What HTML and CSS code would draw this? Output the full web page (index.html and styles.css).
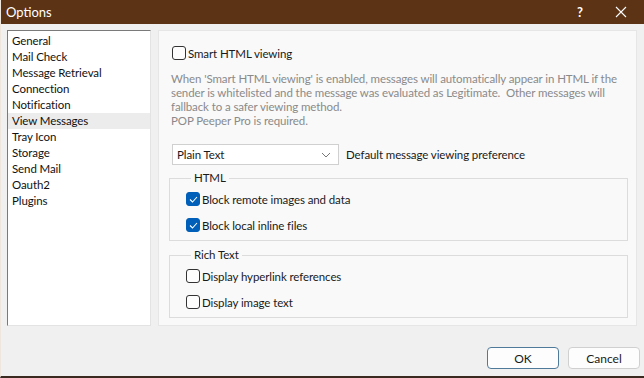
FILE: index.html
```html
<!DOCTYPE html>
<html>

<head>
	<title>Options</title>
	<link rel="stylesheet" href="styles.css">
</head>

<body>
	<div class="window">
		<div class="titlebar">
			<span class="title">Options</span>
			<span class="help">?</span>
			<span class="close">
				<svg width="12" height="12" viewBox="0 0 12 12">
					<path d="M1 1 L11 11 M11 1 L1 11" stroke="#fff" stroke-width="1.1" fill="none" />
				</svg>
			</span>
		</div>

		<div class="main">
			<ul class="nav-list">
				<li>General</li>
				<li>Mail Check</li>
				<li>Message Retrieval</li>
				<li>Connection</li>
				<li>Notification</li>
				<li class="selected">View Messages</li>
				<li>Tray Icon</li>
				<li>Storage</li>
				<li>Send Mail</li>
				<li>Oauth2</li>
				<li>Plugins</li>
			</ul>

			<div class="panel">
				<label class="check smart">
					<span class="box"></span>
					<span>Smart HTML viewing</span>
				</label>

				<p class="description">
					When 'Smart HTML viewing' is enabled, messages will automatically appear in HTML if the<br>
					sender is whitelisted and the message was evaluated as Legitimate.&nbsp; Other messages will<br>
					fallback to a safer viewing method.<br>
					POP Peeper Pro is required.
				</p>

				<div class="view-row">
					<div class="dropdown">
						<span>Plain Text</span>
						<svg width="10" height="6" viewBox="0 0 10 6">
							<path d="M1 1 L5 5 L9 1" stroke="#777" stroke-width="1" fill="none" />
						</svg>
					</div>
					<span class="dropdown-label">Default message viewing preference</span>
				</div>

				<fieldset class="group">
					<legend>HTML</legend>
					<label class="check checked">
						<span class="box">
							<svg width="9" height="7" viewBox="0 0 9 7">
								<path d="M1 3.5 L3.5 6 L8 1" stroke="#fff" stroke-width="1.1" fill="none" />
							</svg>
						</span>
						<span>Block remote images and data</span>
					</label>
					<label class="check checked">
						<span class="box">
							<svg width="9" height="7" viewBox="0 0 9 7">
								<path d="M1 3.5 L3.5 6 L8 1" stroke="#fff" stroke-width="1.1" fill="none" />
							</svg>
						</span>
						<span>Block local inline files</span>
					</label>
				</fieldset>

				<fieldset class="group">
					<legend>Rich Text</legend>
					<label class="check">
						<span class="box"></span>
						<span>Display hyperlink references</span>
					</label>
					<label class="check">
						<span class="box"></span>
						<span>Display image text</span>
					</label>
				</fieldset>
			</div>
		</div>

		<div class="footer">
			<button class="btn btn-default">OK</button>
			<button class="btn">Cancel</button>
		</div>
	</div>
</body>

</html>
```

FILE: styles.css
```css
body {
	margin: 0;
	padding: 0;
	background-color: #f0f0f0;
	font-family: Lato, "Noto Sans", sans-serif;
	font-size: 11.5px;
	letter-spacing: -0.1px;
	color: #1a1a1a;
}

.window {
	width: 644px;
	height: 378px;
	display: flex;
	flex-direction: column;
	box-sizing: border-box;
	border-left: 1px solid #efe6de;
	border-bottom: 2px solid #3a2a20;
}

.titlebar {
	height: 24px;
	background-color: #5c3314;
	color: #fff;
	display: flex;
	align-items: center;
	padding-left: 5px;
	flex-shrink: 0;
}

.title {
	font-size: 13px;
	letter-spacing: 0;
	flex: 1;
}

.help {
	font-size: 13px;
	font-weight: bold;
	width: 12px;
	margin-right: 26px;
}

.close {
	display: flex;
	width: 12px;
	margin-right: 17px;
}

.main {
	display: flex;
	margin-top: 6px;
	margin-left: 6px;
	height: 296px;
}

.nav-list {
	list-style: none;
	margin: 0;
	padding: 2px 0 0 0;
	width: 144px;
	box-sizing: border-box;
	background-color: #fff;
	border-top: 1px solid #7a7a7a;
	border-left: 1px solid #7a7a7a;
	border-right: 1px solid #e3e3e3;
	border-bottom: 1px solid #e3e3e3;
}

.nav-list li {
	height: 16px;
	line-height: 16px;
	padding-left: 4px;
	color: #111;
}

.nav-list li.selected {
	background-color: #ececec;
}

.panel {
	margin-left: 7px;
	width: 479px;
	box-sizing: border-box;
	background-color: #f9f9f9;
	border: 1px solid #e6e6e6;
	padding: 14px 9px 0 10px;
}

.check {
	display: flex;
	align-items: center;
	height: 16px;
	color: #1a1a1a;
}

.check .box {
	width: 12px;
	height: 12px;
	border: 1px solid #333;
	border-radius: 3px;
	background-color: #fdfdfd;
	margin-right: 2px;
	display: flex;
	align-items: center;
	justify-content: center;
}

.check.checked .box {
	background-color: #005fb8;
	border-color: #005fb8;
}

.smart {
	margin-left: 3px;
}

.description {
	margin: 11px 0 0 2px;
	color: #8a8a8a;
	line-height: 14px;
	white-space: nowrap;
}

.view-row {
	display: flex;
	align-items: center;
	margin-top: 16px;
	margin-left: 3px;
}

.dropdown {
	width: 167px;
	height: 21px;
	box-sizing: border-box;
	background-color: #fff;
	border: 1px solid #d0d0d0;
	display: flex;
	align-items: center;
	justify-content: space-between;
	padding: 0 7px 0 4px;
}

.dropdown-label {
	margin-left: 7px;
}

.group {
	margin: 6px 0 0 0;
	border: 1px solid #dcdcdc;
	padding: 0 0 5px 16px;
	width: 459px;
	box-sizing: border-box;
}

.group legend {
	padding: 0 3px;
	margin-left: 5px;
	line-height: 14px;
}

.group .check {
	margin-top: 6px;
	margin-bottom: 2px;
}

.group .check + .check {
	margin-top: 10px;
}

.group + .group {
	margin-top: 7px;
}

.footer {
	display: flex;
	justify-content: flex-end;
	gap: 9px;
	padding-right: 4px;
	margin-top: auto;
	margin-bottom: 7px;
}

.btn {
	width: 72px;
	height: 22px;
	font-family: inherit;
	font-size: 12px;
	background-color: #fdfdfd;
	border: 1px solid #d0d0d0;
	border-radius: 4px;
	color: #1a1a1a;
}

.btn-default {
	border-color: #4f7a99;
}
```
